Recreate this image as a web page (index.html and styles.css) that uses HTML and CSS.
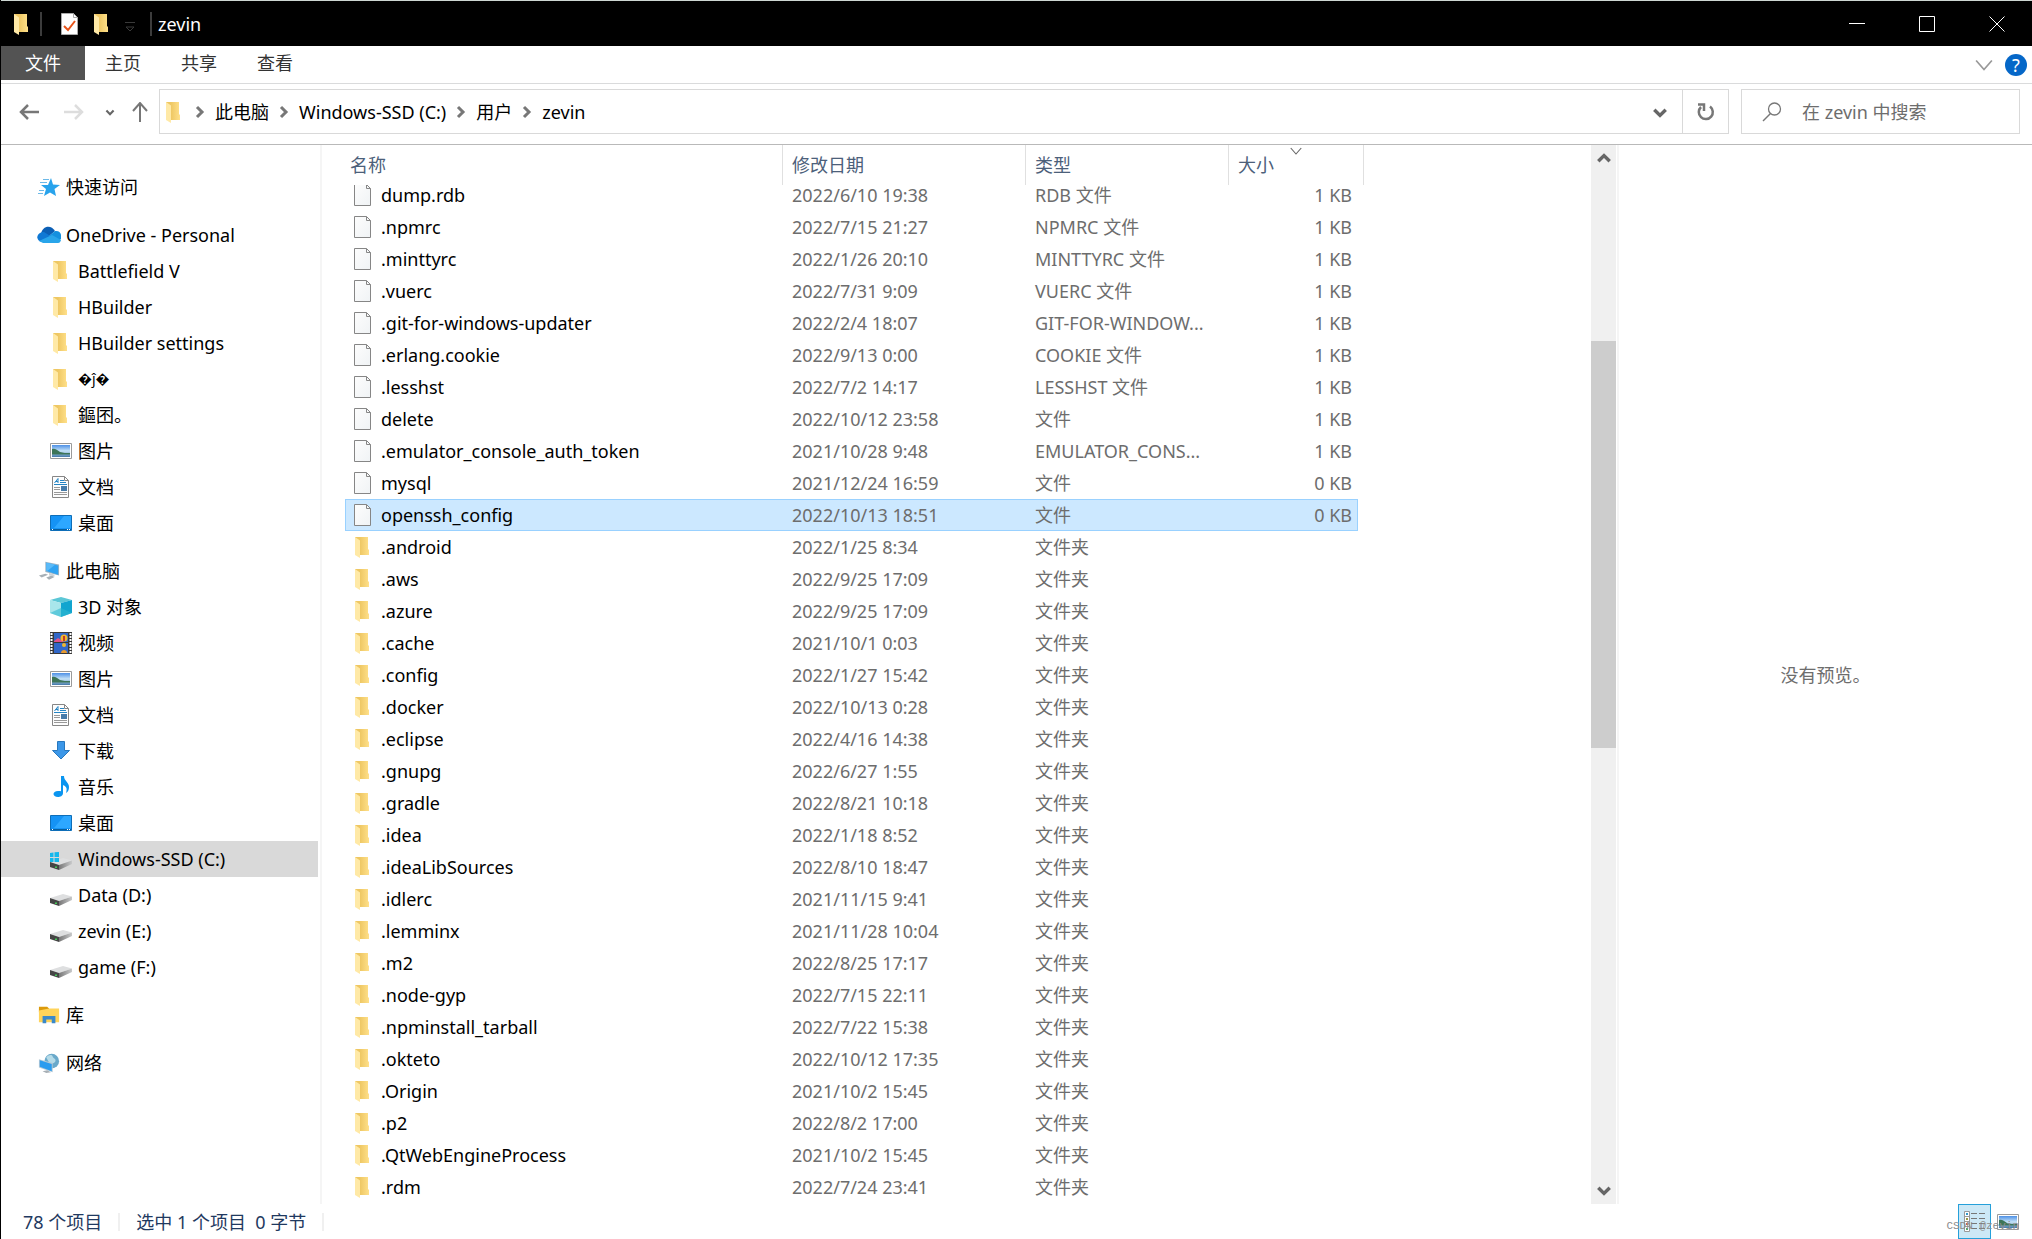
FILE: index.html
```html
<!DOCTYPE html>
<html lang="zh-CN">
<head>
<meta charset="utf-8">
<title>zevin</title>
<link rel="stylesheet" href="styles.css">
</head>
<body>
<svg class="sprite" aria-hidden="true">
  <defs>
    <linearGradient id="g-fold" x1="0" x2="1" y1="0" y2="0"><stop offset="0.35" stop-color="#eec763"/><stop offset="1" stop-color="#ffe08a"/></linearGradient>
    <linearGradient id="g-sky" x1="0" x2="0" y1="0" y2="1"><stop offset="0" stop-color="#4d90e6"/><stop offset="0.5" stop-color="#c6e3f7"/><stop offset="1" stop-color="#4378a8"/></linearGradient>
    <linearGradient id="g-page" x1="0" x2="1" y1="0" y2="1"><stop offset="0" stop-color="#fdfdfd"/><stop offset="1" stop-color="#f0f3f5"/></linearGradient>
    <linearGradient id="g-metal" x1="0" x2="1" y1="0" y2="0"><stop offset="0" stop-color="#777"/><stop offset="1" stop-color="#c9cacb"/></linearGradient>
  </defs>
  <symbol id="folder" viewBox="0 0 22 22"><path d="M3 1h13v12l1 1v5H5z" fill="url(#g-fold)"/><path d="M3 1l5 3.500v17.500l-5-3z" fill="#ffe9a6"/></symbol>
  <symbol id="file" viewBox="0 0 22 22"><path d="M2.500.500h12l4 4v17h-16z" fill="url(#g-page)" stroke="#868686"/><path d="M14.500.500v4h4" fill="none" stroke="#868686"/></symbol>
  <symbol id="picture" viewBox="0 0 22 22"><path d="M.500 3.500h21v15H.500z" fill="#fff" stroke="#9b9b9b"/><path d="M2 5h18v12H2z" fill="url(#g-sky)"/><path d="M2 9c3-1 5 1 8 3 3 1 6 1 10 1v1.500H2z" fill="#3d7558"/></symbol>
  <symbol id="document" viewBox="0 0 22 22"><path d="M2.500.500h12l4 4v17h-16z" fill="#fdfdfd" stroke="#868686"/><path d="M14.500.500v4h4" fill="none" stroke="#868686"/><path d="M4.500 7L8 2.500V7M5.500 5.500H8M10 4.500h4M10 6.500h6M4 8.500h13" fill="none" stroke="#2585c4"/><path d="M4 11.500h6M4 13.500h6M4 16.500h13M4 18.500h13" stroke="#999"/><path d="M11 10h6v5h-6z" fill="#467ba9"/></symbol>
  <symbol id="desktop" viewBox="0 0 22 22"><path d="M.500 3.500h21v15H.500z" fill="#1593f5" stroke="#0e6eb8"/><path d="M14 4h7v12H4z" fill="#2da7ff"/><path d="M1 17.500h20" stroke="#075e9e"/><path d="M2 17.500h1M17 17.500h1M19 17.500h1" stroke="#fff"/></symbol>
  <symbol id="star" viewBox="0 0 22 22"><path d="M13 2l2 6.500 7 .500-5.500 4L18 20l-6-3.500L6 20l2-7-5-4h7z" fill="#28a3ec"/><path d="M5 3.500h6M2 6.500h7M1 14.500h5M0 17.500h5" stroke="#6cb9e8"/></symbol>
  <symbol id="cloud" viewBox="0 0 24 18"><path d="M4 8C5 0 14-2 18 5l-7 6z" fill="#0b5fb5"/><path d="M5 16C-2 15-1 6 7 6l11 7z" fill="#0f78d4"/><path d="M12 10l6-5c6-1 7 5 6 8l-4 3z" fill="#1490df"/><path d="M2 15l13-6 9 5c-1 3-2 3-4 3H6z" fill="#29a5ea"/></symbol>
  <symbol id="pc" viewBox="0 0 24 22"><path d="M8 1l15 3v12L8 12z" fill="#9bb3c4"/><path d="M9 2l13 3v10L9 11z" fill="#30a3f2"/><path d="M9 2l10 2-9 7H9z" fill="#5abaf8"/><path d="M1 16l7-2 3 1-7 3zM9 18l6-2 3 1.500-6 3z" fill="#a7afb5"/><path d="M12 13l6 2v2l-6-1z" fill="#ccd2d6"/></symbol>
  <symbol id="cube" viewBox="0 0 22 22"><path d="M0 4l11-3 11 3-11 3z" fill="#5cc7d6"/><path d="M0 4l11 3v14L0 17z" fill="#a9e6eb"/><path d="M22 4L11 7v14l11-4z" fill="#12a5cf"/><path d="M11 12l11 5-11 4-11-4z" fill="#2fb8d0" opacity=".6"/></symbol>
  <symbol id="video" viewBox="0 0 22 22"><path d="M0 0h22v22H0z" fill="#383838"/><path d="M1.500 1v21M20.500 1v21" stroke="#fff" stroke-width="2" stroke-dasharray="2 1"/><path d="M4 1h14v9H4zM4 11h14v10H4z" fill="#3167c8"/><path d="M4 9l4-3 5 3v1H4z" fill="#e0518b"/><circle cx="14" cy="6" r="3.500" fill="#f1b72d"/><path d="M13 4h2v5h-2z" fill="#c33c26"/><circle cx="14" cy="13" r="2" fill="#f1b72d"/><path d="M11 21c0-4 6-4 6 0z" fill="#e89a2d"/></symbol>
  <symbol id="download" viewBox="0 0 22 22"><path d="M7.500 1.500h7v9h5L11 19 2.500 10.500h5z" fill="#3c97e8" stroke="#2878be"/></symbol>
  <symbol id="music" viewBox="0 0 22 22"><path d="M11 0h3c0 5 5 6 5 11 0 3-1 5-3 6 2-6-1-7-3-8v8c0 3-3 4-5 4-6 0-6-6 0-6 2 0 3 0 3 .500z" fill="#0a95f0"/></symbol>
  <symbol id="drive" viewBox="0 0 22 22"><path d="M0 14l13-4 9 2.500L9 17z" fill="#dedfe0"/><path d="M0 14l9 3v5l-9-3z" fill="#454545"/><path d="M9 17l13-4.500V16L9 22z" fill="url(#g-metal)"/><path d="M6 18.500v1.500" stroke="#45c858" stroke-width="2"/></symbol>
  <symbol id="windrive" viewBox="0 0 22 22"><use href="#drive"/><path d="M0 5l3.500-.500V9H0zM4.500 4.300L9 4v5H4.500zM0 10h3.500v4H0zM4.500 10H9v4H4.500z" fill="#16b8ec"/></symbol>
  <symbol id="library" viewBox="0 0 24 22"><path d="M1 2h9l2 2v4H1z" fill="#dc9a0b"/><path d="M1 6l11-2h11v15H1z" fill="#ffd45b"/><path d="M5 12h14v8h-4v-4H9v4H5z" fill="#3a89ca"/></symbol>
  <symbol id="network" viewBox="0 0 24 22"><circle cx="15" cy="9" r="8" fill="#6aa9ca"/><path d="M9 5c3-4 7-3 7-1s4 2 3 5-4 1-5 5z" fill="#b5dbe8"/><path d="M1 7l15 4v10L1 16z" fill="#b5c9d6"/><path d="M2 8l13 4v8L2 15z" fill="#2b9cef"/><path d="M5 20l5-1 4 2-5 1z" fill="#a7afb5"/></symbol>
  <symbol id="down" viewBox="0 0 14 14"><path d="M2 5l5 5 5-5" fill="none" stroke="currentColor" stroke-width="3"/></symbol>
  <symbol id="thin" viewBox="0 0 16 16"><path d="M1 4l7 8 7-8" fill="none" stroke="currentColor" stroke-width="1.500"/></symbol>
  <symbol id="right" viewBox="0 0 10 14"><path d="M2 2l5 5-5 5" fill="none" stroke="#777" stroke-width="3"/></symbol>
</svg>

<div class="window">
  <header class="titlebar">
    <svg class="icon"><use href="#folder"/></svg>
    <span class="bar"></span>
    <button class="quick" aria-label="属性"><svg class="icon" viewBox="0 0 22 22"><path d="M2.500.500h12l4 4v17h-16z" fill="#fff" stroke="#aaa"/><path d="M14.500.500v4h4" fill="none" stroke="#aaa"/><path d="M5 13l4 4 7-9" fill="none" stroke="#e8541a" stroke-width="2"/></svg></button>
    <button class="quick" aria-label="新建文件夹"><svg class="icon"><use href="#folder"/></svg></button>
    <button class="quick more" aria-label="自定义快速访问工具栏"><svg width="10" height="10" viewBox="0 0 10 10"><path d="M0 .500h10M1 5l4 4 4-4z" fill="none" stroke="#3a3a3a"/></svg></button>
    <span class="bar"></span>
    <h1>zevin</h1>
    <div class="controls">
      <button aria-label="最小化"><svg width="16" height="16"><path d="M0 7.500h16" stroke="#fff"/></svg></button>
      <button aria-label="最大化"><svg width="16" height="16"><path d="M.500.500h15v15H.500z" fill="none" stroke="#fff"/></svg></button>
      <button aria-label="关闭"><svg width="16" height="16"><path d="M.500.500l15 15M15.500.500l-15 15" stroke="#fff"/></svg></button>
    </div>
  </header>

  <div class="ribbon">
    <button class="tab file">文件</button>
    <button class="tab">主页</button>
    <button class="tab">共享</button>
    <button class="tab">查看</button>
    <div class="ribbon-end">
      <button class="expand" aria-label="展开功能区"><svg width="18" height="18"><use href="#thin"/></svg></button>
      <button class="help" aria-label="帮助">?</button>
    </div>
  </div>

  <div class="toolbar">
    <div class="arrows">
      <button aria-label="后退"><svg width="20" height="18" viewBox="0 0 20 18"><path d="M9 2L2 9l7 7M2 9h18" fill="none" stroke="#777" stroke-width="2.500"/></svg></button>
      <button class="forward" aria-label="前进"><svg width="20" height="18" viewBox="0 0 20 18"><path d="M11 2l7 7-7 7M18 9H0" fill="none" stroke="#ddd" stroke-width="2.500"/></svg></button>
      <button aria-label="最近"><svg width="10" height="10"><use href="#down"/></svg></button>
      <button aria-label="上移"><svg width="16" height="20" viewBox="0 0 16 20"><path d="M1 9l7-8 7 8M8 1v19" fill="none" stroke="#777" stroke-width="2"/></svg></button>
    </div>
    <div class="address">
      <svg class="icon"><use href="#folder"/></svg>
      <svg class="sep"><use href="#right"/></svg><a href="#">此电脑</a>
      <svg class="sep"><use href="#right"/></svg><a href="#">Windows-SSD (C:)</a>
      <svg class="sep"><use href="#right"/></svg><a href="#">用户</a>
      <svg class="sep"><use href="#right"/></svg><a href="#">zevin</a>
      <button class="history" aria-label="以前的位置"><svg width="16" height="16"><use href="#down"/></svg></button>
      <button class="refresh" aria-label="刷新"><svg width="20" height="20" viewBox="0 0 20 20"><path d="M14 4.500A7 7 0 1 1 5 5" fill="none" stroke="#777" stroke-width="2.500"/><path d="M2 2.500h6V9" fill="none" stroke="#777" stroke-width="2.500"/></svg></button>
    </div>
    <label class="search">
      <svg width="20" height="20" viewBox="0 0 20 20"><circle cx="12.500" cy="7" r="6" fill="none" stroke="#777" stroke-width="1.300"/><path d="M8.500 11.500L1 19" stroke="#777" stroke-width="1.500"/></svg>
      <input type="text" placeholder="在 zevin 中搜索" aria-label="在 zevin 中搜索">
    </label>
  </div>

  <div class="content">
    <nav class="tree">
      <ul>
        <li><a href="#"><svg class="icon"><use href="#star"/></svg>快速访问</a></li>
      </ul>
      <ul>
        <li><a href="#" class="onedrive"><svg class="icon"><use href="#cloud"/></svg>OneDrive - Personal</a></li>
        <li class="sub"><a href="#"><svg class="icon"><use href="#folder"/></svg>Battlefield V</a></li>
        <li class="sub"><a href="#"><svg class="icon"><use href="#folder"/></svg>HBuilder</a></li>
        <li class="sub"><a href="#"><svg class="icon"><use href="#folder"/></svg>HBuilder settings</a></li>
        <li class="sub"><a href="#" class="garbled"><svg class="icon"><use href="#folder"/></svg>&#xFFFD;ĵ&#xFFFD;</a></li>
        <li class="sub"><a href="#"><svg class="icon"><use href="#folder"/></svg>鏂囨。</a></li>
        <li class="sub"><a href="#"><svg class="icon"><use href="#picture"/></svg>图片</a></li>
        <li class="sub"><a href="#"><svg class="icon"><use href="#document"/></svg>文档</a></li>
        <li class="sub"><a href="#"><svg class="icon"><use href="#desktop"/></svg>桌面</a></li>
      </ul>
      <ul>
        <li><a href="#"><svg class="icon"><use href="#pc"/></svg>此电脑</a></li>
        <li class="sub"><a href="#"><svg class="icon"><use href="#cube"/></svg>3D 对象</a></li>
        <li class="sub"><a href="#"><svg class="icon"><use href="#video"/></svg>视频</a></li>
        <li class="sub"><a href="#"><svg class="icon"><use href="#picture"/></svg>图片</a></li>
        <li class="sub"><a href="#"><svg class="icon"><use href="#document"/></svg>文档</a></li>
        <li class="sub"><a href="#"><svg class="icon"><use href="#download"/></svg>下载</a></li>
        <li class="sub"><a href="#"><svg class="icon"><use href="#music"/></svg>音乐</a></li>
        <li class="sub"><a href="#"><svg class="icon"><use href="#desktop"/></svg>桌面</a></li>
        <li class="sub current"><a href="#"><svg class="icon"><use href="#windrive"/></svg>Windows-SSD (C:)</a></li>
        <li class="sub"><a href="#"><svg class="icon"><use href="#drive"/></svg>Data (D:)</a></li>
        <li class="sub"><a href="#"><svg class="icon"><use href="#drive"/></svg>zevin (E:)</a></li>
        <li class="sub"><a href="#"><svg class="icon"><use href="#drive"/></svg>game (F:)</a></li>
      </ul>
      <ul>
        <li><a href="#"><svg class="icon"><use href="#library"/></svg>库</a></li>
      </ul>
      <ul>
        <li><a href="#"><svg class="icon"><use href="#network"/></svg>网络</a></li>
      </ul>
    </nav>

    <main class="files">
      <table>
        <colgroup><col class="c-name"><col class="c-date"><col class="c-type"><col class="c-size"></colgroup>
        <thead>
          <tr><th><div>名称</div></th><th><div>修改日期</div></th><th><div>类型</div></th><th class="sorted"><div>大小<svg width="12" height="12"><use href="#thin"/></svg></div></th></tr>
        </thead>
        <tbody>
          <tr><td><svg class="icon"><use href="#file"/></svg>dump.rdb</td><td>2022/6/10 19:38</td><td>RDB 文件</td><td>1 KB</td></tr>
          <tr><td><svg class="icon"><use href="#file"/></svg>.npmrc</td><td>2022/7/15 21:27</td><td>NPMRC 文件</td><td>1 KB</td></tr>
          <tr><td><svg class="icon"><use href="#file"/></svg>.minttyrc</td><td>2022/1/26 20:10</td><td>MINTTYRC 文件</td><td>1 KB</td></tr>
          <tr><td><svg class="icon"><use href="#file"/></svg>.vuerc</td><td>2022/7/31 9:09</td><td>VUERC 文件</td><td>1 KB</td></tr>
          <tr><td><svg class="icon"><use href="#file"/></svg>.git-for-windows-updater</td><td>2022/2/4 18:07</td><td>GIT-FOR-WINDOW...</td><td>1 KB</td></tr>
          <tr><td><svg class="icon"><use href="#file"/></svg>.erlang.cookie</td><td>2022/9/13 0:00</td><td>COOKIE 文件</td><td>1 KB</td></tr>
          <tr><td><svg class="icon"><use href="#file"/></svg>.lesshst</td><td>2022/7/2 14:17</td><td>LESSHST 文件</td><td>1 KB</td></tr>
          <tr><td><svg class="icon"><use href="#file"/></svg>delete</td><td>2022/10/12 23:58</td><td>文件</td><td>1 KB</td></tr>
          <tr><td><svg class="icon"><use href="#file"/></svg>.emulator_console_auth_token</td><td>2021/10/28 9:48</td><td>EMULATOR_CONS...</td><td>1 KB</td></tr>
          <tr><td><svg class="icon"><use href="#file"/></svg>mysql</td><td>2021/12/24 16:59</td><td>文件</td><td>0 KB</td></tr>
          <tr class="selected"><td><svg class="icon"><use href="#file"/></svg>openssh_config</td><td>2022/10/13 18:51</td><td>文件</td><td>0 KB</td></tr>
          <tr><td><svg class="icon"><use href="#folder"/></svg>.android</td><td>2022/1/25 8:34</td><td>文件夹</td><td></td></tr>
          <tr><td><svg class="icon"><use href="#folder"/></svg>.aws</td><td>2022/9/25 17:09</td><td>文件夹</td><td></td></tr>
          <tr><td><svg class="icon"><use href="#folder"/></svg>.azure</td><td>2022/9/25 17:09</td><td>文件夹</td><td></td></tr>
          <tr><td><svg class="icon"><use href="#folder"/></svg>.cache</td><td>2021/10/1 0:03</td><td>文件夹</td><td></td></tr>
          <tr><td><svg class="icon"><use href="#folder"/></svg>.config</td><td>2022/1/27 15:42</td><td>文件夹</td><td></td></tr>
          <tr><td><svg class="icon"><use href="#folder"/></svg>.docker</td><td>2022/10/13 0:28</td><td>文件夹</td><td></td></tr>
          <tr><td><svg class="icon"><use href="#folder"/></svg>.eclipse</td><td>2022/4/16 14:38</td><td>文件夹</td><td></td></tr>
          <tr><td><svg class="icon"><use href="#folder"/></svg>.gnupg</td><td>2022/6/27 1:55</td><td>文件夹</td><td></td></tr>
          <tr><td><svg class="icon"><use href="#folder"/></svg>.gradle</td><td>2022/8/21 10:18</td><td>文件夹</td><td></td></tr>
          <tr><td><svg class="icon"><use href="#folder"/></svg>.idea</td><td>2022/1/18 8:52</td><td>文件夹</td><td></td></tr>
          <tr><td><svg class="icon"><use href="#folder"/></svg>.ideaLibSources</td><td>2022/8/10 18:47</td><td>文件夹</td><td></td></tr>
          <tr><td><svg class="icon"><use href="#folder"/></svg>.idlerc</td><td>2021/11/15 9:41</td><td>文件夹</td><td></td></tr>
          <tr><td><svg class="icon"><use href="#folder"/></svg>.lemminx</td><td>2021/11/28 10:04</td><td>文件夹</td><td></td></tr>
          <tr><td><svg class="icon"><use href="#folder"/></svg>.m2</td><td>2022/8/25 17:17</td><td>文件夹</td><td></td></tr>
          <tr><td><svg class="icon"><use href="#folder"/></svg>.node-gyp</td><td>2022/7/15 22:11</td><td>文件夹</td><td></td></tr>
          <tr><td><svg class="icon"><use href="#folder"/></svg>.npminstall_tarball</td><td>2022/7/22 15:38</td><td>文件夹</td><td></td></tr>
          <tr><td><svg class="icon"><use href="#folder"/></svg>.okteto</td><td>2022/10/12 17:35</td><td>文件夹</td><td></td></tr>
          <tr><td><svg class="icon"><use href="#folder"/></svg>.Origin</td><td>2021/10/2 15:45</td><td>文件夹</td><td></td></tr>
          <tr><td><svg class="icon"><use href="#folder"/></svg>.p2</td><td>2022/8/2 17:00</td><td>文件夹</td><td></td></tr>
          <tr><td><svg class="icon"><use href="#folder"/></svg>.QtWebEngineProcess</td><td>2021/10/2 15:45</td><td>文件夹</td><td></td></tr>
          <tr><td><svg class="icon"><use href="#folder"/></svg>.rdm</td><td>2022/7/24 23:41</td><td>文件夹</td><td></td></tr>
        </tbody>
      </table>
    </main>

    <div class="scrollbar">
      <button class="up" aria-label="向上滚动"><svg width="16" height="16"><use href="#down"/></svg></button>
      <div class="track"><div class="thumb"></div></div>
      <button aria-label="向下滚动"><svg width="16" height="16"><use href="#down"/></svg></button>
    </div>

    <aside class="preview">没有预览。</aside>
  </div>

  <footer class="status">
    <span class="cell">78 个项目</span>
    <span class="cell">选中 1 个项目&nbsp; 0 字节</span>
    <div class="views">
      <button class="details" aria-label="详细信息"><svg width="22" height="22" viewBox="0 0 22 22"><path d="M.500.500h5v20h-5zM.500 5.500h5M.500 10.500h5M.500 15.500h5" fill="#fff" stroke="#999"/><path d="M7 2.500h6M15 2.500h6M7 7.500h6M15 7.500h6M7 12.500h6M15 12.500h6M7 17.500h6M15 17.500h6" stroke="#777"/><path d="M2 2h2v2H2z" fill="#39c"/><path d="M2 7h2v2H2z" fill="#994"/><path d="M2 12h2v2H2z" fill="#c63"/><path d="M2 17h2v2H2z" fill="#5a6"/></svg></button>
      <button aria-label="大缩略图"><svg class="icon"><use href="#picture"/></svg></button>
      <span class="watermark">CSDN @zevin</span>
    </div>
  </footer>
</div>
</body>
</html>
```

FILE: styles.css
```css
* { box-sizing: border-box; }

body {
  margin: 0;
  background: #fff;
  color: #000;
  font: 18px/24px "Noto Sans", "Noto Sans CJK SC", sans-serif;
}

button {
  padding: 0;
  border: 0;
  background: none;
  color: #666;
  font: inherit;
  display: flex;
  align-items: center;
  justify-content: center;
}

a { color: inherit; text-decoration: none; }
svg { display: block; flex: none; }
.sprite { position: absolute; width: 0; height: 0; }
.icon { width: 22px; height: 22px; }

.window {
  display: flex;
  flex-direction: column;
  min-height: 100vh;
  border-left: 1px solid #000;
}

/* title bar */
.titlebar {
  display: flex;
  align-items: center;
  height: 46px;
  padding-left: 10px;
  border-top: 1px solid #cdd6d2;
  background: #000;
  color: #fff;
}
.bar { width: 2px; height: 24px; background: #3c3c3c; margin-left: 7px; }
.quick { width: 32px; height: 32px; }
.quick:first-of-type { margin-left: 12px; }
.more { margin: 6px 0 0; width: 24px; }
.bar + h1 { margin: 0 0 0 6px; font-size: 18px; font-weight: 400; }
.more + .bar { margin-left: 8px; }
.controls { display: flex; margin-left: auto; }
.controls button { width: 70px; height: 44px; }

/* ribbon */
.ribbon {
  display: flex;
  height: 38px;
  border-bottom: 1px solid #dadbdc;
}
.tab { height: 34px; padding: 0 20px; color: #333; }
.file { padding: 0 24px; background: #535353; color: #fff; }
.ribbon-end {
  display: flex;
  align-items: center;
  gap: 12px;
  margin-left: auto;
  padding-right: 5px;
}
.expand { color: #999; }
.help {
  width: 22px;
  height: 22px;
  border-radius: 50%;
  background: #0567c8;
  color: #fff;
}

/* navigation bar */
.toolbar {
  display: flex;
  height: 61px;
  padding: 5px 12px 10px 0;
  border-bottom: 1px solid #b9b9b9;
}
.arrows {
  display: flex;
  align-items: center;
  justify-content: space-between;
  width: 158px;
  padding: 0 11px 0 18px;
}
.forward { margin: 0 4px 0 8px; }
.address {
  display: flex;
  flex: 1;
  align-items: center;
  border: 1px solid #d9d9d9;
  padding-left: 3px;
}
.sep { width: 10px; height: 14px; margin: 0 10px; }
.history { width: 44px; height: 44px; margin-left: auto; }
.refresh { width: 46px; height: 44px; border-left: 1px solid #d9d9d9; }
.search {
  display: flex;
  align-items: center;
  gap: 20px;
  width: 279px;
  margin-left: 12px;
  padding-left: 20px;
  border: 1px solid #d9d9d9;
}
.search input {
  flex: 1;
  min-width: 0;
  padding: 0;
  border: 0;
  outline: 0;
  background: none;
  font: inherit;
}
.search input::placeholder { color: #6d6d6d; opacity: 1; }

/* body */
.content { display: flex; flex: 1; }

.tree {
  width: 321px;
  padding: 24px 2px 0 0;
  border-right: 2px solid #f5f5f5;
}
.tree ul { margin: 0 0 12px; padding: 0; list-style: none; }
.tree a {
  display: flex;
  align-items: center;
  gap: 6px;
  height: 36px;
  padding-left: 37px;
}
.tree .sub a { padding-left: 49px; }
.tree .onedrive { gap: 5px; padding-left: 36px; }
.onedrive .icon { width: 24px; height: 18px; }
.tree .current { background: #d9d9d9; }
.tree .garbled { font-size: 14px; }

.files { flex: 1; padding-left: 23px; }
table { width: 1013px; table-layout: fixed; border-collapse: collapse; }
.c-name { width: 438px; }
.c-date { width: 243px; }
.c-type { width: 203px; }
.c-size { width: 129px; }
th { height: 34px; padding: 0; font-weight: 400; text-align: left; }
th div {
  position: relative;
  z-index: 1;
  height: 40px;
  margin-bottom: -6px;
  padding: 8px 0 8px 9px;
  border-right: 1px solid #e0e0e0;
  background: #fff;
  color: #4c607a;
}
th:first-child div { padding-left: 5px; }
.sorted div { margin-right: -6px; }
.sorted svg { position: absolute; top: 0; left: 50%; color: #666; margin-left: -6px; }
td {
  height: 32px;
  padding: 0 0 0 9px;
  overflow: hidden;
  color: #6d6d6d;
  white-space: nowrap;
}
td:first-child { display: flex; align-items: center; gap: 7px; padding-left: 7px; color: #000; }
td:last-child { padding-right: 6px; text-align: right; }
.selected { background: #cce8ff; outline: 1px solid #99d1ff; outline-offset: -1px; }

.scrollbar {
  display: flex;
  flex-direction: column;
  width: 25px;
  color: #555;
  background: #f0f0f0;
}
.scrollbar button { height: 28px; }
.up svg { transform: rotate(180deg); }
.track { flex: 1; display: flex; flex-direction: column; }
.track::before { content: ""; flex: 168; }
.track::after { content: ""; flex: 428; }
.thumb { flex: 407; background: #cdcdcd; }

.preview {
  display: flex;
  align-items: center;
  justify-content: center;
  width: 415px;
  margin-left: 1px;
  border-left: 2px solid #f5f5f5;
  color: #6d6d6d;
}

/* status bar */
.status {
  display: flex;
  align-items: center;
  height: 35px;
  padding: 0 13px 0 22px;
  color: #1f3960;
}
.status .cell {
  margin-right: 16px;
  padding-right: 16px;
  border-right: 2px solid #f0f0f0;
  line-height: 18px;
}
.views { position: relative; display: flex; gap: 6px; margin-left: auto; }
.details { width: 33px; height: 35px; border: 1px solid #26a0da; background: #cce8f6; }
.watermark {
  position: absolute;
  right: 0;
  bottom: 5px;
  color: #8c8c8c;
  font: 11px/16px "Liberation Mono", monospace;
  white-space: nowrap;
}
```
